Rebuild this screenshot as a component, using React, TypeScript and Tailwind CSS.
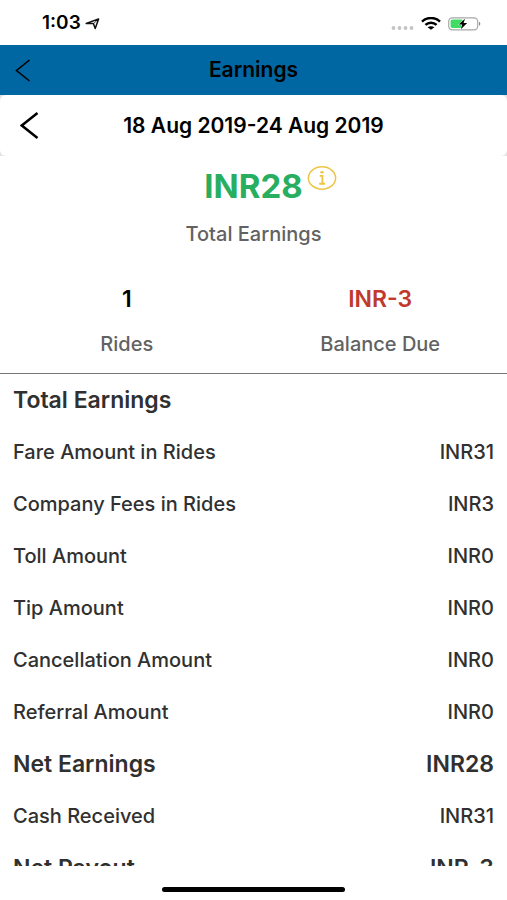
interface EarningRow {
  label: string;
  amount?: string;
  strong?: boolean;
}

const ROWS: EarningRow[] = [
  { label: 'Total Earnings', strong: true },
  { label: 'Fare Amount in Rides', amount: 'INR31' },
  { label: 'Company Fees in Rides', amount: 'INR3' },
  { label: 'Toll Amount', amount: 'INR0' },
  { label: 'Tip Amount', amount: 'INR0' },
  { label: 'Cancellation Amount', amount: 'INR0' },
  { label: 'Referral Amount', amount: 'INR0' },
  { label: 'Net Earnings', amount: 'INR28', strong: true },
  { label: 'Cash Received', amount: 'INR31' },
  { label: 'Net Payout', amount: 'INR-3', strong: true },
];

function StatusBar() {
  return (
    <div className="flex h-[45px] shrink-0 items-center justify-between pt-0.5 pr-[26px] pl-[42px]">
      <div className="flex items-center gap-1">
        <span className="text-[19px] font-semibold">1:03</span>
        <svg width="15" height="12" viewBox="0 0 15 12" fill="none" stroke="#111" strokeWidth="1.5" strokeLinejoin="round">
          <path d="M1.2 5.4 13.6 1 10.2 10.6 8.4 5.6Z" />
          <path d="M8.4 5.6 13.6 1" strokeWidth="0.8" />
        </svg>
      </div>
      <div className="flex items-center gap-[7px]">
        <svg width="23" height="14" viewBox="0 0 23 14" fill="#c4c4c4">
          <circle cx="2.5" cy="11" r="1.9" />
          <circle cx="8.5" cy="11" r="1.9" />
          <circle cx="14.5" cy="11" r="1.9" />
          <circle cx="20.5" cy="11" r="1.9" />
        </svg>
        <svg width="20" height="13" viewBox="0 0 20 13" fill="none" stroke="#000" strokeWidth="2.5">
          <path d="M1 4.6C6-0.2 14-0.2 19 4.6" />
          <path d="M4.4 7.9C7.6 5 12.4 5 15.6 7.9" />
          <path d="M10 12.8 6.6 10.3C8.6 8.8 11.4 8.8 13.4 10.3Z" fill="#000" stroke="none" />
        </svg>
        <svg width="33" height="14" viewBox="0 0 33 14">
          <rect x="0.7" y="0.8" width="29" height="12" rx="3.6" fill="#fff" stroke="#a8a8a8" strokeWidth="1.2" />
          <rect x="2.6" y="2.5" width="12.5" height="8.6" rx="1.8" fill="#3fdc62" />
          <path d="M31 4.8C32.8 5.5 32.8 8.1 31 8.8Z" fill="#888" />
          <path d="M17 1.8 10.6 7.5H14.2L12.8 12.3 19.2 6.1H15.6Z" fill="#000" stroke="#fff" strokeWidth="1" paintOrder="stroke" />
        </svg>
      </div>
    </div>
  );
}

function Stat({ value, label, valueClass }: { value: string; label: string; valueClass: string }) {
  return (
    <div className="flex flex-1 flex-col items-center gap-[21px]">
      <div className={`text-[23px] leading-6 font-semibold ${valueClass}`}>{value}</div>
      <div className="text-[20px] leading-6 font-medium text-[#626262]">{label}</div>
    </div>
  );
}

export default function App() {
  return (
    <div className="flex h-screen flex-col bg-white font-['Inter','Liberation_Sans',sans-serif] text-black">
      <StatusBar />

      <header className="grid h-[50px] shrink-0 grid-cols-[1fr_auto_1fr] items-center bg-[#0067a3]">
        <button type="button" aria-label="Back" className="justify-self-start pl-[15px]">
          <svg width="16" height="23" viewBox="0 0 16 23" fill="none" stroke="#000" strokeWidth="1.6">
            <path d="M14.5 1 1.5 11.5 14.5 22" />
          </svg>
        </button>
        <h1 className="text-[21px] font-semibold">Earnings</h1>
      </header>

      <div className="shrink-0 bg-[#e4e4e6]">
        <div className="grid h-[61px] grid-cols-[1fr_auto_1fr] items-center rounded-md bg-white">
          <button type="button" aria-label="Previous week" className="justify-self-start pl-5">
            <svg width="19" height="27" viewBox="0 0 19 27" fill="none" stroke="#000" strokeWidth="2.5">
              <path d="M17.5 1 1.8 13.5 17.5 26" />
            </svg>
          </button>
          <h2 className="text-[21px] font-semibold">18 Aug 2019-24 Aug 2019</h2>
        </div>
      </div>

      <section className="shrink-0 border-b border-[#777] pt-[9px] pb-[17px]">
        <div className="flex justify-center gap-1 pl-[34px]">
          <span className="pt-[3px] text-[33px] leading-9 font-bold text-[#27ae60]">INR28</span>
          <button type="button" aria-label="Earnings information" className="self-start pt-px">
            <svg width="30" height="25" viewBox="0 0 30 25" fill="none" stroke="#edc545">
              <ellipse cx="15" cy="12" rx="13.6" ry="11.2" strokeWidth="1.5" />
              <path d="M12.7 9.9H15.4V17.5M12.2 17.7H18" strokeWidth="1.9" />
              <ellipse cx="15" cy="6.2" rx="1.7" ry="1.3" fill="#edc545" stroke="none" />
            </svg>
          </button>
        </div>
        <div className="mt-[18px] text-center text-[20px] leading-6 font-medium text-[#626262]">Total Earnings</div>
        <div className="mt-[41px] flex">
          <Stat value="1" label="Rides" valueClass="text-black" />
          <Stat value="INR-3" label="Balance Due" valueClass="text-[#c0392b]" />
        </div>
      </section>

      <main className="min-h-0 flex-1 overflow-hidden">
        <table className="w-full text-[#303030]">
          <tbody>
            {ROWS.map((row) => {
              const text = row.strong ? 'text-[23px] font-semibold' : 'text-[20px] font-medium';
              return (
                <tr key={row.label} className="h-[52px]">
                  <th scope="row" className={`py-0 pl-[13px] text-left ${text}`}>{row.label}</th>
                  <td className={`py-0 pr-[13px] text-right ${text}`}>{row.amount}</td>
                </tr>
              );
            })}
          </tbody>
        </table>
      </main>

      <footer className="flex h-[34px] shrink-0 justify-center pt-[21px]">
        <div className="h-[5px] w-[36%] rounded-full bg-black" />
      </footer>
    </div>
  );
}
